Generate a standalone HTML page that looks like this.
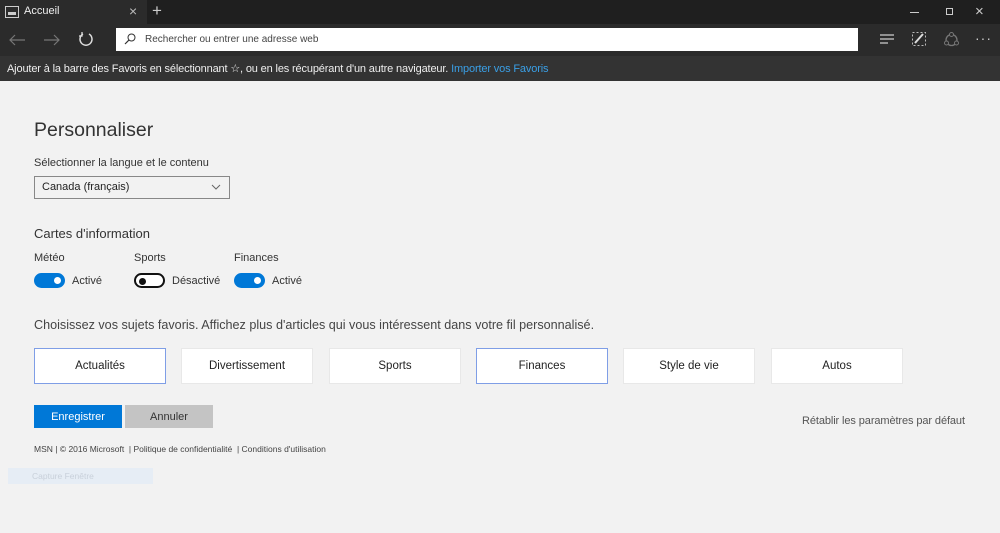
<!DOCTYPE html>
<html><head><meta charset="utf-8"><style>
*{margin:0;padding:0;box-sizing:border-box}
body{width:1000px;height:533px;background:#f2f2f2;font-family:"Liberation Sans",sans-serif;position:relative;overflow:hidden;color:#333}
.a{position:absolute}
.t{white-space:nowrap}
.tog{position:absolute;width:31px;height:15px;border-radius:8px;background:#0078d7}
.tog::after{content:"";position:absolute;right:4px;top:4px;width:7px;height:7px;border-radius:50%;background:#fff}
.off{background:#fff;border:2px solid #111}
.off::after{left:3px;top:2.5px;right:auto;background:#111}
.card{position:absolute;top:348px;width:132px;height:36px;background:#fff;border:1px solid #e8e8e8;font-size:11.5px;color:#222;display:flex;align-items:center;justify-content:center}
.sel{border:1px solid #7f9ee6}
.btn{position:absolute;top:405px;width:88px;height:23px;font-size:11px;display:flex;align-items:center;justify-content:center}
</style></head><body>
<div class="a" style="left:0;top:0;width:1000px;height:24px;background:#1f1f1f"></div>
<div class="a" style="left:0;top:0;width:147px;height:24px;background:#2b2b2b"></div>
<svg class="a" style="left:5px;top:6px" width="14" height="12"><rect x="0.5" y="0.5" width="13" height="11" fill="none" stroke="#ccc"/><rect x="3" y="6" width="8" height="3" fill="#ccc"/></svg>
<div class="a t" style="left:24px;top:5px;font-size:11px;color:#eee">Accueil</div>
<div class="a t" style="left:129px;top:3px;font-size:14px;color:#bbb">×</div>
<div class="a t" style="left:152px;top:1px;font-size:17px;color:#ccc">+</div>
<div class="a" style="left:910px;top:12px;width:9px;height:1px;background:#ccc"></div>
<div class="a" style="left:946px;top:8px;width:7px;height:7px;border:1px solid #ccc"></div>
<div class="a t" style="left:975px;top:3px;font-size:15px;color:#ccc">×</div>
<div class="a" style="left:0;top:24px;width:1000px;height:32px;background:#2b2b2b"></div>
<svg class="a" style="left:8px;top:33px" width="18" height="14"><path d="M17 7H2M7 2L2 7l5 5" fill="none" stroke="#777" stroke-width="1.2"/></svg>
<svg class="a" style="left:43px;top:33px" width="18" height="14"><path d="M1 7h15M11 2l5 5-5 5" fill="none" stroke="#777" stroke-width="1.2"/></svg>
<svg class="a" style="left:78px;top:31px" width="16" height="16"><path d="M5 3A6 6 0 1 0 11 3" fill="none" stroke="#ddd" stroke-width="1.5"/><path d="M4 1v4h-3" fill="none" stroke="#ddd" stroke-width="1.3"/></svg>
<div class="a" style="left:116px;top:28px;width:742px;height:23px;background:#fff"></div>
<svg class="a" style="left:124px;top:33px" width="12" height="12"><circle cx="7.5" cy="4.5" r="3.5" fill="none" stroke="#333"/><path d="M5 7L1 11" stroke="#333" stroke-width="1.2"/></svg>
<div class="a t" style="left:145px;top:34px;font-size:10px;color:#444">Rechercher ou entrer une adresse web</div>
<svg class="a" style="left:879px;top:33px" width="16" height="12"><path d="M1 2h14M1 6h14M1 10h8" stroke="#ccc" stroke-width="1.3"/></svg>
<svg class="a" style="left:911px;top:31px" width="16" height="16"><rect x="1.5" y="1.5" width="13" height="13" fill="none" stroke="#bbb" stroke-dasharray="2 2"/><path d="M4 12L12 3" stroke="#ddd" stroke-width="2"/></svg>
<svg class="a" style="left:943px;top:31px" width="17" height="16"><circle cx="8.5" cy="9" r="5.5" fill="none" stroke="#777" stroke-width="1.3"/><circle cx="8.5" cy="3.5" r="2" fill="#2b2b2b" stroke="#777"/><circle cx="3.5" cy="12" r="2" fill="#2b2b2b" stroke="#777"/><circle cx="13.5" cy="12" r="2" fill="#2b2b2b" stroke="#777"/></svg>
<div class="a t" style="left:975px;top:30px;font-size:14px;color:#ccc;letter-spacing:1px">···</div>
<div class="a" style="left:0;top:56px;width:1000px;height:25px;background:#333"></div>
<div class="a t" style="left:7px;top:62px;font-size:11px;letter-spacing:-0.15px;color:#eee">Ajouter à la barre des Favoris en sélectionnant ☆, ou en les récupérant d'un autre navigateur. <span style="color:#3a9fe6">Importer vos Favoris</span></div>
<div class="a t" style="left:34px;top:119px;font-size:19.5px;color:#333">Personnaliser</div>
<div class="a t" style="left:34px;top:157px;font-size:11px">Sélectionner la langue et le contenu</div>
<div class="a" style="left:34px;top:176px;width:196px;height:23px;border:1px solid #888;background:#f2f2f2"></div>
<div class="a t" style="left:42px;top:181px;font-size:11px;color:#222">Canada (français)</div>
<svg class="a" style="left:211px;top:184px" width="10" height="6"><path d="M1 1l4 4 4-4" fill="none" stroke="#666"/></svg>
<div class="a t" style="left:34px;top:226px;font-size:13px">Cartes d'information</div>
<div class="a t" style="left:34px;top:252px;font-size:11px">Météo</div>
<div class="a t" style="left:134px;top:252px;font-size:11px">Sports</div>
<div class="a t" style="left:234px;top:252px;font-size:11px">Finances</div>
<div class="tog" style="left:34px;top:273px"></div><div class="a t" style="left:72px;top:275px;font-size:11px">Activé</div>
<div class="tog off" style="left:134px;top:273px"></div><div class="a t" style="left:172px;top:275px;font-size:11px">Désactivé</div>
<div class="tog" style="left:234px;top:273px"></div><div class="a t" style="left:272px;top:275px;font-size:11px">Activé</div>
<div class="a t" style="left:34px;top:318px;font-size:12.6px;color:#444">Choisissez vos sujets favoris. Affichez plus d'articles qui vous intéressent dans votre fil personnalisé.</div>
<div class="card sel" style="left:34px">Actualités</div>
<div class="card" style="left:181px">Divertissement</div>
<div class="card" style="left:329px">Sports</div>
<div class="card sel" style="left:476px">Finances</div>
<div class="card" style="left:623px">Style de vie</div>
<div class="card" style="left:771px">Autos</div>
<div class="btn" style="left:34px;background:#0078d7;color:#fff">Enregistrer</div>
<div class="btn" style="left:125px;background:#c4c4c4;color:#333">Annuler</div>
<div class="a t" style="left:802px;top:415px;font-size:11px;letter-spacing:-0.1px;color:#555">Rétablir les paramètres par défaut</div>
<div class="a t" style="left:34px;top:444px;font-size:8.5px;color:#444">MSN | © 2016 Microsoft &nbsp;| Politique de confidentialité &nbsp;| Conditions d'utilisation</div>
<div class="a" style="left:8px;top:468px;width:145px;height:16px;background:#e6edf5"></div>
<div class="a t" style="left:32px;top:471px;font-size:8.5px;color:#c8d0da">Capture Fenêtre</div>
</body></html>
